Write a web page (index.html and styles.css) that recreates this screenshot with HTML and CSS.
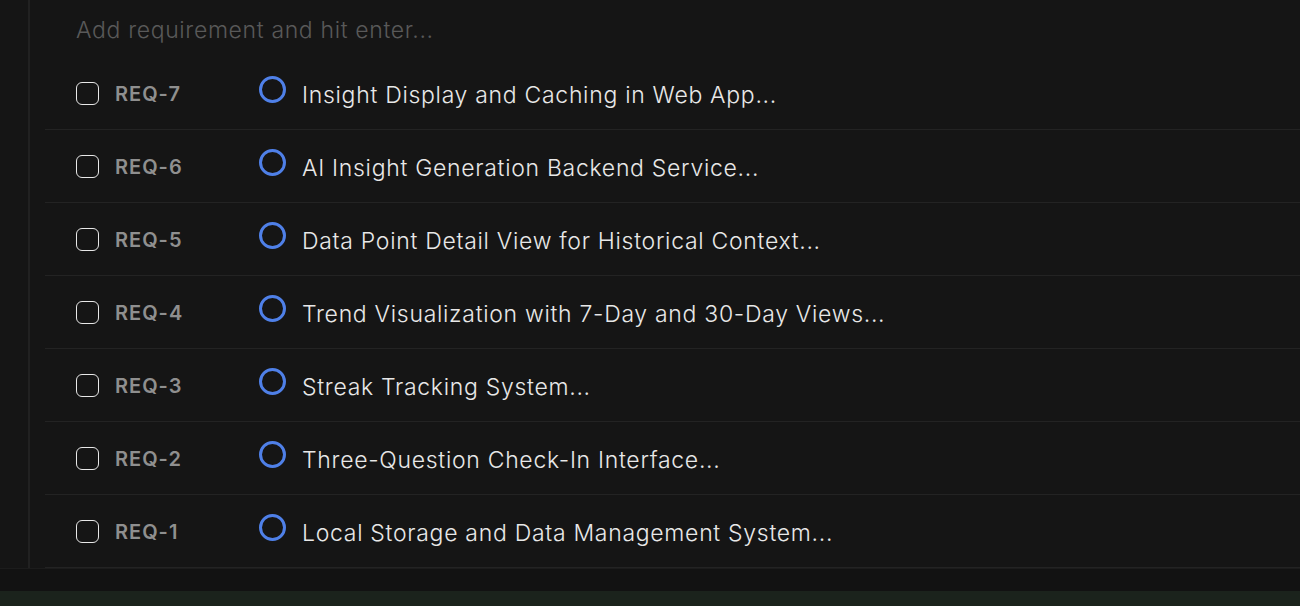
FILE: index.html
```html
<!DOCTYPE html>
<html>
<head>
<meta charset="utf-8">
<link rel="stylesheet" href="styles.css">
</head>
<body>
<div class="panel">
  <div class="thread">
    <div class="input-row">
      <input class="new-req" type="text" placeholder="Add requirement and hit enter...">
    </div>
    <ul class="req-list">
      <li class="req"><span class="check"></span><span class="req-id">REQ-7</span><span class="status"></span><span class="title">Insight Display and Caching in Web App...</span></li>
      <li class="req"><span class="check"></span><span class="req-id">REQ-6</span><span class="status"></span><span class="title">AI Insight Generation Backend Service...</span></li>
      <li class="req"><span class="check"></span><span class="req-id">REQ-5</span><span class="status"></span><span class="title">Data Point Detail View for Historical Context...</span></li>
      <li class="req"><span class="check"></span><span class="req-id">REQ-4</span><span class="status"></span><span class="title">Trend Visualization with 7-Day and 30-Day Views...</span></li>
      <li class="req"><span class="check"></span><span class="req-id">REQ-3</span><span class="status"></span><span class="title">Streak Tracking System...</span></li>
      <li class="req"><span class="check"></span><span class="req-id">REQ-2</span><span class="status"></span><span class="title">Three-Question Check-In Interface...</span></li>
      <li class="req"><span class="check"></span><span class="req-id">REQ-1</span><span class="status"></span><span class="title">Local Storage and Data Management System...</span></li>
    </ul>
  </div>
</div>
<div class="gap"></div>
<div class="footer-band"></div>
</body>
</html>
```
FILE: styles.css
```css
html, body {
  margin: 0;
  padding: 0;
  background: #121212;
  font-family: "Inter", "Liberation Sans", sans-serif;
  overflow: hidden;
}
.panel {
  background: #151515;
  padding-left: 28px;
  border-bottom: 1px solid #1c1c1c;
}
.thread {
  border-left: 2px solid #212121;
  padding-left: 15px;
}
.input-row {
  height: 57px;
  display: flex;
  align-items: center;
  padding-left: 31px;
}
.new-req {
  background: transparent;
  border: none;
  outline: none;
  font-family: "Inter", "Liberation Sans", sans-serif;
  font-size: 23px;
  font-weight: 300;
  letter-spacing: 0.65px;
  color: #ddd;
  padding: 0;
  margin-top: 2px;
  width: 700px;
}
.new-req::placeholder {
  color: #595959;
}
.req-list {
  list-style: none;
  margin: 0;
  padding: 0;
}
.req {
  height: 72px;
  border-bottom: 1px solid #232323;
  display: flex;
  align-items: center;
  padding-left: 31px;
}
.check {
  width: 21px;
  height: 21px;
  border: 1.6px solid #e8e8e8;
  border-radius: 6px;
  flex: none;
  margin-top: 1px;
}
.req-id {
  margin-left: 16px;
  width: 144px;
  font-size: 20px;
  font-weight: 600;
  color: #8f8f8f;
  letter-spacing: 1px;
  margin-top: 2px;
}
.status {
  width: 21px;
  height: 21px;
  border: 3px solid #4f80e8;
  border-radius: 50%;
  flex: none;
  margin-top: -8px;
}
.title {
  margin-left: 16px;
  font-size: 23px;
  font-weight: 300;
  letter-spacing: 0.7px;
  color: #e8e8e8;
  margin-top: 3px;
}
.gap {
  height: 22px;
}
.footer-band {
  height: 20px;
  background: #1b231c;
}
```
